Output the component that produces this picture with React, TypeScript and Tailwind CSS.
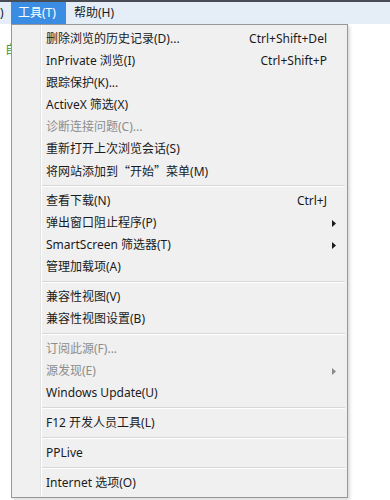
const font = "font-['Noto_Sans','Noto_Sans_CJK_SC',sans-serif]";

type Item =
  | { sep: true }
  | { label: React.ReactNode; shortcut?: string; sub?: boolean; disabled?: boolean };

const cjk = "font-['Noto_Sans_CJK_SC',sans-serif]";

const items: Item[] = [
  { label: "删除浏览的历史记录(D)...", shortcut: "Ctrl+Shift+Del" },
  { label: "InPrivate 浏览(I)", shortcut: "Ctrl+Shift+P" },
  { label: "跟踪保护(K)..." },
  { label: "ActiveX 筛选(X)" },
  { label: "诊断连接问题(C)...", disabled: true },
  { label: "重新打开上次浏览会话(S)" },
  {
    label: (
      <>
        将网站添加到<span className={cjk}>“</span>开始<span className={cjk}>”</span>菜单(M)
      </>
    ),
  },
  { sep: true },
  { label: "查看下载(N)", shortcut: "Ctrl+J" },
  { label: "弹出窗口阻止程序(P)", sub: true },
  { label: "SmartScreen 筛选器(T)", sub: true },
  { label: "管理加载项(A)" },
  { sep: true },
  { label: "兼容性视图(V)" },
  { label: "兼容性视图设置(B)" },
  { sep: true },
  { label: "订阅此源(F)...", disabled: true },
  { label: "源发现(E)", sub: true, disabled: true },
  { label: "Windows Update(U)" },
  { sep: true },
  { label: "F12 开发人员工具(L)" },
  { sep: true },
  { label: "PPLive" },
  { sep: true },
  { label: "Internet 选项(O)" },
];

function Arrow({ disabled }: { disabled?: boolean }) {
  return (
    <svg width="4" height="7" viewBox="0 0 4 7" className="absolute right-[11px] top-[8px]">
      <path d="M0 0 L4 3.5 L0 7 Z" fill={disabled ? "#8a8a8a" : "#1a1a1a"} />
    </svg>
  );
}

function MenuRow({ item }: { item: Item }) {
  if ("sep" in item) {
    return (
      <div className="h-[8px] flex flex-col justify-center pl-[29px] pr-[2px]">
        <div className="h-px bg-[#d7d7d7]" />
        <div className="h-px bg-white" />
      </div>
    );
  }
  return (
    <div
      className={`relative h-[22px] flex items-center pl-[34px] pr-[20px] text-[12px] ${
        item.disabled ? "text-[#8d8d8d]" : "text-[#1b1b1b]"
      }`}
    >
      <span className="flex-1 whitespace-nowrap">{item.label}</span>
      {item.shortcut && <span className="whitespace-nowrap">{item.shortcut}</span>}
      {item.sub && <Arrow disabled={item.disabled} />}
    </div>
  );
}

export default function App() {
  return (
    <div className={`relative w-[390px] h-[500px] overflow-hidden bg-white ${font}`}>
      {/* menu bar */}
      <div className="h-[2px] bg-[#474c55]" />
      <div className="h-[22px] bg-[#e5edf7] flex items-center text-[12px] text-[#1b1b1b]">
        <span className="w-[11px]">)</span>
        <span className="h-full px-[7px] flex items-center bg-[#3b8de3] text-white w-[55px]">工具(T)</span>
        <span className="ml-[8px]">帮助(H)</span>
      </div>
      {/* page behind */}
      <div className="pt-[17px] pl-[5px] text-[12px] text-[#3a9a3a]">自</div>

      {/* dropdown */}
      <div className="absolute left-[11px] top-[24px] w-[337px] border border-[#979797] bg-[#f0f0f0] py-[3px] shadow-[2px_2px_3px_rgba(0,0,0,0.15)]">
        <div className="absolute left-[28px] top-0 bottom-0 w-px bg-[#e2e3e3]" />
        <div className="absolute left-[29px] top-0 bottom-0 w-px bg-white" />
        {items.map((it, i) => (
          <MenuRow key={i} item={it} />
        ))}
      </div>
    </div>
  );
}
